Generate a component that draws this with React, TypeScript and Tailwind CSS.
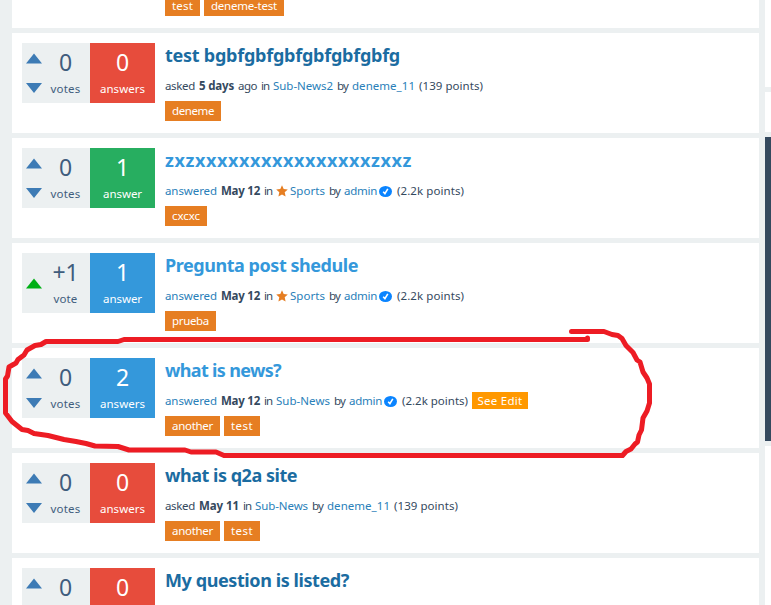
import { useLayoutEffect, useRef, useState } from "react";
import type { ReactNode } from "react";

/* A single run of text tracked so that it spans exactly `w` pixels. */
function Fit({ w, children, className = "" }: { w: number; children: string; className?: string }) {
  const ref = useRef<HTMLSpanElement>(null);
  const [spacing, setSpacing] = useState(0);
  useLayoutEffect(() => {
    if (!ref.current) return;
    const natural = ref.current.getBoundingClientRect().width;
    setSpacing((w - natural) / children.length);
  }, [w, children]);
  return (
    <span className={`block shrink-0 whitespace-pre ${className}`} style={{ width: w }}>
      <span ref={ref} className="inline-block" style={{ letterSpacing: spacing }}>
        {children}
      </span>
    </span>
  );
}

function Link({ w, children }: { w: number; children: string }) {
  return <Fit w={w} className="text-[#2980b9]">{children}</Fit>;
}

function Bold({ w, children }: { w: number; children: string }) {
  return <Fit w={w} className="font-bold">{children}</Fit>;
}

function Star() {
  return (
    <svg className="-mr-[2px] mt-px h-3 w-3 shrink-0" viewBox="0 0 12 12" fill="#e67e22">
      <path d="M6 0.3 7.7 4.1 11.8 4.5 8.7 7.3 9.6 11.5 6 9.4 2.4 11.5 3.3 7.3 0.2 4.5 4.3 4.1Z" />
    </svg>
  );
}

function Verified() {
  return (
    <svg className="-ml-[2px] mr-px mt-px h-[11px] w-[13px] shrink-0" viewBox="0 0 13 11">
      <ellipse cx="6.5" cy="5.5" rx="6.5" ry="5.5" fill="#0a84ff" />
      <path d="M4.2 5.8 5.9 7.6 8.8 2.8" fill="none" stroke="#fff" strokeWidth="1.6" />
    </svg>
  );
}

type Tag = [string, number];

interface Question {
  title: string;
  titleWidth: number;
  answered?: boolean;
  votes: string;
  count: string;
  tone: "red" | "green" | "blue";
  meta?: ReactNode;
  tags: Tag[];
}

const tones = { red: "bg-[#e74c3c]", green: "bg-[#27ae60]", blue: "bg-[#3498db]" };

const questions: Question[] = [
  {
    title: "test bgbfgbfgbfgbfgbfgbfg", titleWidth: 235, votes: "0", count: "0", tone: "red",
    meta: (
      <>
        <Fit w={30}>asked</Fit><Bold w={35}>5 days</Bold><Fit w={19}>ago</Fit><Fit w={8}>in</Fit>
        <Link w={60}>Sub-News2</Link><Fit w={11}>by</Fit><Link w={63}>deneme_11</Link><Fit w={64}>(139 points)</Fit>
      </>
    ),
    tags: [["deneme", 42]],
  },
  {
    title: "zxzxxxxxxxxxxxxxxxxzxxz", titleWidth: 247, answered: true, votes: "0", count: "1", tone: "green",
    meta: (
      <>
        <Link w={52}>answered</Link><Bold w={39}>May 12</Bold><Fit w={8}>in</Fit><Star />
        <Link w={35}>Sports</Link><Fit w={11}>by</Fit><Link w={33}>admin</Link><Verified /><Fit w={67}>(2.2k points)</Fit>
      </>
    ),
    tags: [["cxcxc", 28]],
  },
  {
    title: "Pregunta post shedule", titleWidth: 193, answered: true, votes: "+1", count: "1", tone: "blue",
    meta: (
      <>
        <Link w={52}>answered</Link><Bold w={39}>May 12</Bold><Fit w={8}>in</Fit><Star />
        <Link w={35}>Sports</Link><Fit w={11}>by</Fit><Link w={33}>admin</Link><Verified /><Fit w={67}>(2.2k points)</Fit>
      </>
    ),
    tags: [["prueba", 37]],
  },
  {
    title: "what is news?", titleWidth: 116, answered: true, votes: "0", count: "2", tone: "blue",
    meta: (
      <>
        <Link w={52}>answered</Link><Bold w={39}>May 12</Bold><Fit w={8}>in</Fit>
        <Link w={54}>Sub-News</Link><Fit w={11}>by</Fit><Link w={33}>admin</Link><Verified /><Fit w={66}>(2.2k points)</Fit>
        <span className="flex h-[17px] w-14 items-center justify-center bg-[#ff9800] text-white"><Fit w={45}>See Edit</Fit></span>
      </>
    ),
    tags: [["another", 41], ["test", 22]],
  },
  {
    title: "what is q2a site", titleWidth: 132, votes: "0", count: "0", tone: "red",
    meta: (
      <>
        <Fit w={30}>asked</Fit><Bold w={40}>May 11</Bold><Fit w={8}>in</Fit>
        <Link w={53}>Sub-News</Link><Fit w={11}>by</Fit><Link w={63}>deneme_11</Link><Fit w={64}>(139 points)</Fit>
      </>
    ),
    tags: [["another", 41], ["test", 22]],
  },
  {
    title: "My question is listed?", titleWidth: 184, votes: "0", count: "0", tone: "red",
    tags: [],
  },
];

function Tags({ tags }: { tags: Tag[] }) {
  return (
    <div className="flex gap-1">
      {tags.map(([name, w]) => (
        <span key={name} className="flex h-5 items-center bg-[#e67e22] px-[7px] text-[11.5px] leading-5 text-white">
          <Fit w={w}>{name}</Fit>
        </span>
      ))}
    </div>
  );
}

function Stat({ value, label, labelWidth }: { value: string; label?: string; labelWidth: number }) {
  return (
    <div className="flex flex-col items-center">
      <Fit w={value === "+1" ? 26 : 13} className="mt-[3px] h-8 text-[23px] leading-8">{value}</Fit>
      {label && <Fit w={labelWidth} className="mt-[3px] h-4 text-[11.5px] leading-4">{label}</Fit>}
    </div>
  );
}

function Card({ q }: { q: Question }) {
  const upvoted = q.votes === "+1";
  const cutOff = !q.meta;
  return (
    <article className="flex h-[100px] shrink-0 bg-white p-[10px]">
      <div className="flex h-[60px] w-[68px] shrink-0 bg-[#ecf0f1] text-[#3f5d7d]">
        <svg className="h-[60px] w-6 shrink-0" viewBox="0 0 24 60">
          {upvoted ? (
            <path d="M4 35.5 12 25.5 20 35.5Z" fill="#00b016" />
          ) : (
            <path d="M4 20.5 12 10.5 20 20.5ZM4 40 20 40 12 50Z" fill="#3d7bb5" />
          )}
        </svg>
        <div className="flex w-[39px] justify-center">
          <Stat value={q.votes} label={cutOff ? undefined : upvoted ? "vote" : "votes"} labelWidth={upvoted ? 24 : 30} />
        </div>
      </div>
      <div className={`flex h-[60px] w-[65px] shrink-0 justify-center text-white ${tones[q.tone]}`}>
        <Stat value={q.count} label={cutOff ? undefined : q.count === "1" ? "answer" : "answers"} labelWidth={q.count === "1" ? 39 : 45} />
      </div>
      <div className="ml-[10px]">
        <h2 className={`-mt-px h-[26px] text-[18px] leading-[26px] font-bold ${q.answered ? "text-[#3498db]" : "text-[#1b6ca1]"}`}>
          <Fit w={q.titleWidth}>{q.title}</Fit>
        </h2>
        <div className="mt-[9px] mb-[7px] flex h-[17px] items-center gap-1 text-[11.5px] leading-[17px]">{q.meta}</div>
        <Tags tags={q.tags} />
      </div>
    </article>
  );
}

export default function App() {
  return (
    <div className="relative flex h-[605px] w-[771px] overflow-hidden bg-[#ecf0f1] font-['Noto_Sans','Open_Sans',sans-serif] text-[#34495e]">
      <main className="ml-3 flex w-[747px] shrink-0 flex-col gap-[5px]">
        <article className="h-7 shrink-0 bg-white pl-[153px]">
          <div className="-mt-1">
            <Tags tags={[["test", 21], ["deneme-test", 66]]} />
          </div>
        </article>
        {questions.map((q) => <Card key={q.title} q={q} />)}
      </main>
      <aside className="ml-[6px] flex w-[6px] shrink-0 flex-col gap-[5px]">
        <div className="h-[87px] shrink-0 bg-white" />
        <div className="h-10 shrink-0 bg-white" />
        <div className="h-[304px] shrink-0 bg-[#34495e]" />
        <div className="grow bg-white" />
      </aside>
      <svg className="absolute inset-0 h-[605px] w-[771px]" viewBox="0 0 771 605" fill="none" stroke="#ed1c24" strokeWidth="5" strokeLinecap="round" strokeLinejoin="round">
        <path d="M587.5 338V339.5H124L118 341.5H46L41 344.5 35 345.5 27 350 24 355 18 359.5 16 363 9 367 7.5 376 5.5 379V413L12 421.5 22 429.5 28 430.5 34 433.5 48 435.5 64 439.5 76 441.5 86 443.5 95 446 118 446.5 129 450H185L191 452H216L224 455.5H622.5L626 451.5 631 449 635 444 637.5 442 639 435 641.5 430 643 418 647 411 649.5 403V384L647 378 643 372 640 362 637 360 633 352.5 626 345.5 622 338.5 618 335.5 612 334.5 604 331.5H571.5" />
      </svg>
    </div>
  );
}
